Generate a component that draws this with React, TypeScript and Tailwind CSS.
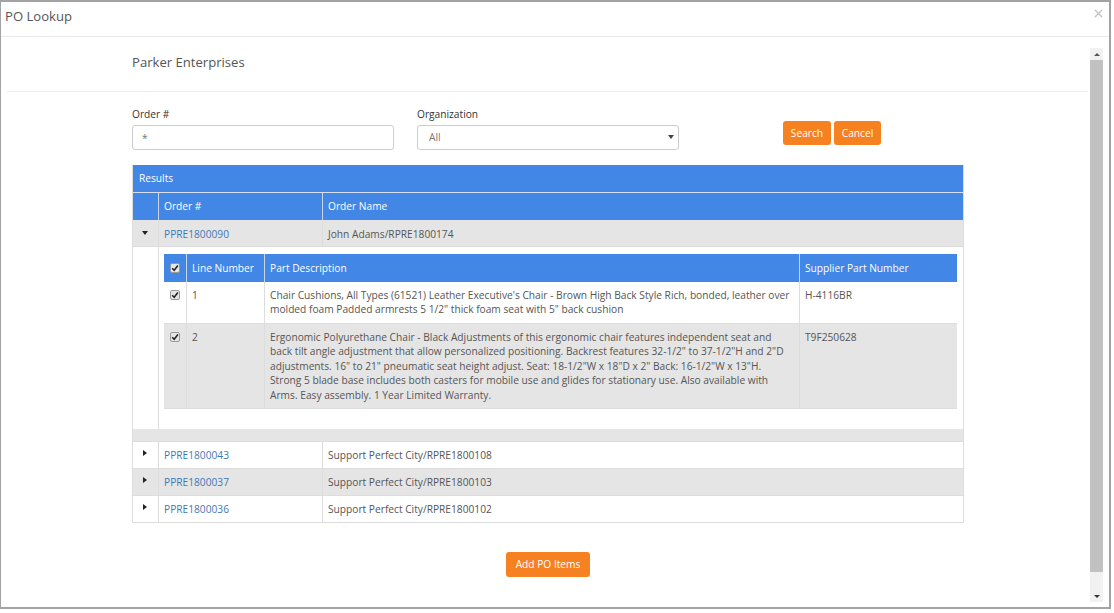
import { X } from "lucide-react";

const font = { fontFamily: '"Open Sans", sans-serif' };

function Caret({ open }: { open?: boolean }) {
  return open ? (
    <span className="block w-0 h-0 border-x-[3.5px] border-x-transparent border-t-[4px] border-t-[#222]" />
  ) : (
    <span className="block w-0 h-0 border-y-[3.5px] border-y-transparent border-l-[4px] border-l-[#222]" />
  );
}

function Check() {
  return (
    <span className="flex items-center justify-center w-[10px] h-[10px] bg-[#e6e6e6] border border-[#9a9a9a] rounded-[2px]">
      <svg viewBox="0 0 10 10" className="w-[8px] h-[8px]">
        <path d="M1.5 5.2 L4 7.8 L8.6 1.8" fill="none" stroke="#222" strokeWidth="1.9" />
      </svg>
    </span>
  );
}

function OrderRow({ id, name, gray, open }: { id: string; name: string; gray?: boolean; open?: boolean }) {
  return (
    <div className={`flex h-[27px] border-b border-[#ddd] ${gray ? "bg-[#e5e5e5]" : "bg-white"}`}>
      <div className={`w-[26px] shrink-0 border-r border-[#ddd] flex justify-center ${open ? "pt-[11px] pr-[1px]" : "pt-[8px] pr-[2px]"}`}>
        <Caret open={open} />
      </div>
      <div className={`w-[164px] shrink-0 border-r border-[#ddd] pl-[5px] flex items-center ${open ? "pt-[3px]" : "pt-[2px]"}`}>
        <a className="text-[#3f79b5]">{id}</a>
      </div>
      <div className={`flex-1 pl-[5px] flex items-center ${open ? "pt-[3px]" : "pt-[2px]"}`}>{name}</div>
    </div>
  );
}

function LineRow({ num, desc, part, gray, h }: { num: string; desc: string; part: string; gray?: boolean; h: string }) {
  return (
    <div className={`flex border-b border-[#ddd] leading-[14.4px] ${h} ${gray ? "bg-[#e5e5e5]" : "bg-white"}`}>
      <div className="w-[23px] shrink-0 border-r border-[#ddd] flex justify-center pt-[8px]">
        <Check />
      </div>
      <div className="w-[78px] shrink-0 border-r border-[#ddd] pl-[5px] pt-[6px]">{num}</div>
      <div className="w-[535px] shrink-0 border-r border-[#ddd] pl-[5px] pr-[5px] pt-[6px]">{desc}</div>
      <div className="flex-1 pl-[5px] pt-[6px]">{part}</div>
    </div>
  );
}

export default function App() {
  return (
    <div className="w-[1114px] h-[613px] bg-white overflow-hidden text-[10.2px] text-[#555]" style={font}>
      <div className="w-[1111px] h-[609px] border-t-2 border-l border-r-2 border-b-2 border-[#a3a3a3] flex flex-col">
        <div className="h-[35px] shrink-0 border-b border-[#e8e8e8] flex items-center justify-between pl-[4px] pr-[4px]">
          <span className="text-[13.1px] leading-none pb-[4px]">PO Lookup</span>
          <X className="w-[13px] h-[13px] text-[#c4c4c4] mb-[11px]" strokeWidth={2.5} />
        </div>
        <div className="flex-1 flex min-h-0 pt-[11px]">
          <div className="flex-1 min-w-0">
            <div className="h-[44px] ml-[6px] mr-[2px] border-b border-[#eee] pl-[125px] flex items-start pt-[5px]">
              <span className="text-[13.1px] leading-[18px]">Parker Enterprises</span>
            </div>
            <div className="pl-[131px] w-[963px]">
              <div className="flex h-[73px] pt-[15px]">
                <div className="w-[262px] mr-[23px]">
                  <label className="block h-[18px] leading-[14px] text-[#333]">Order #</label>
                  <input
                    defaultValue="*"
                    className="w-[262px] h-[25px] border border-[#ccc] rounded-[3px] px-[9px] pt-[1px] text-[#777] outline-none"
                  />
                </div>
                <div className="w-[262px]">
                  <label className="block h-[18px] leading-[14px] text-[#333]">Organization</label>
                  <div className="relative">
                    <select className="w-[262px] h-[25px] border border-[#ccc] rounded-[3px] pl-[11px] pt-[1px] text-[#777] appearance-none bg-white outline-none">
                      <option>All</option>
                    </select>
                    <span className="absolute right-[5px] top-[10px] w-0 h-0 border-x-[3px] border-x-transparent border-t-[4px] border-t-[#444]" />
                  </div>
                </div>
                <div className="flex gap-[3px] ml-[104px] pt-[14px]">
                  <button className="w-[48px] h-[24px] pt-[1px] bg-[#f68121] rounded-[3px] text-white">Search</button>
                  <button className="w-[47px] h-[24px] pt-[1px] bg-[#f68121] rounded-[3px] text-white">Cancel</button>
                </div>
              </div>
              <div className="w-[832px] border-x border-[#ddd]">
                <div className="h-[28px] bg-[#4286e6] text-white flex items-center pl-[6px] border-b border-[#d5dfee]">Results</div>
                <div className="flex h-[27px] bg-[#4286e6] text-white">
                  <div className="w-[26px] shrink-0 border-r border-[#c9d6ea]" />
                  <div className="w-[164px] shrink-0 border-r border-[#c9d6ea] pl-[5px] flex items-center">Order #</div>
                  <div className="flex-1 pl-[5px] flex items-center">Order Name</div>
                </div>
                <OrderRow id="PPRE1800090" name="John Adams/RPRE1800174" gray open />
                <div className="flex h-[182px]">
                  <div className="w-[26px] shrink-0 border-r border-[#ddd]" />
                  <div className="flex-1 pl-[5px] pr-[6px] pt-[7px]">
                    <div className="flex h-[28px] bg-[#4286e6] text-white">
                      <div className="w-[23px] shrink-0 border-r border-[#c9d6ea] flex justify-center items-center">
                        <Check />
                      </div>
                      <div className="w-[78px] shrink-0 border-r border-[#c9d6ea] pl-[5px] pt-[1px] flex items-center">Line Number</div>
                      <div className="w-[535px] shrink-0 border-r border-[#c9d6ea] pl-[5px] pt-[1px] flex items-center">Part Description</div>
                      <div className="flex-1 pl-[5px] pt-[1px] flex items-center">Supplier Part Number</div>
                    </div>
                    <LineRow
                      h="h-[42px]"
                      num="1"
                      part="H-4116BR"
                      desc={'Chair Cushions, All Types (61521) Leather Executive\'s Chair - Brown High Back Style Rich, bonded, leather over molded foam Padded armrests 5 1/2" thick foam seat with 5" back cushion'}
                    />
                    <LineRow
                      h="h-[85px]"
                      gray
                      num="2"
                      part="T9F250628"
                      desc={'Ergonomic Polyurethane Chair - Black Adjustments of this ergonomic chair features independent seat and back tilt angle adjustment that allow personalized positioning. Backrest features 32-1/2" to 37-1/2"H and 2"D adjustments. 16" to 21" pneumatic seat height adjust. Seat: 18-1/2"W x 18"D x 2" Back: 16-1/2"W x 13"H. Strong 5 blade base includes both casters for mobile use and glides for stationary use. Also available with Arms. Easy assembly. 1 Year Limited Warranty.'}
                    />
                  </div>
                </div>
                <div className="h-[13px] bg-[#e5e5e5] border-b border-[#ddd]" />
                <OrderRow id="PPRE1800043" name="Support Perfect City/RPRE1800108" />
                <OrderRow id="PPRE1800037" name="Support Perfect City/RPRE1800103" gray />
                <OrderRow id="PPRE1800036" name="Support Perfect City/RPRE1800102" />
              </div>
              <div className="w-[832px] flex justify-center pt-[29px]">
                <button className="w-[84px] h-[25px] pt-[1px] bg-[#f68121] rounded-[3px] text-white">Add PO Items</button>
              </div>
            </div>
          </div>
          <div className="w-[13px] shrink-0 mr-[6px] mb-[5px] bg-[#f1f1f1] flex flex-col">
            <div className="h-[12px] flex items-center justify-center">
              <span className="w-0 h-0 border-x-[3px] border-x-transparent border-b-[3px] border-b-[#555]" />
            </div>
            <div className="flex-1 bg-[#c1c1c1]" />
            <div className="h-[30px] flex items-end justify-center pb-[4px]">
              <span className="w-0 h-0 border-x-[3px] border-x-transparent border-t-[3px] border-t-[#333]" />
            </div>
          </div>
        </div>
      </div>
    </div>
  );
}
